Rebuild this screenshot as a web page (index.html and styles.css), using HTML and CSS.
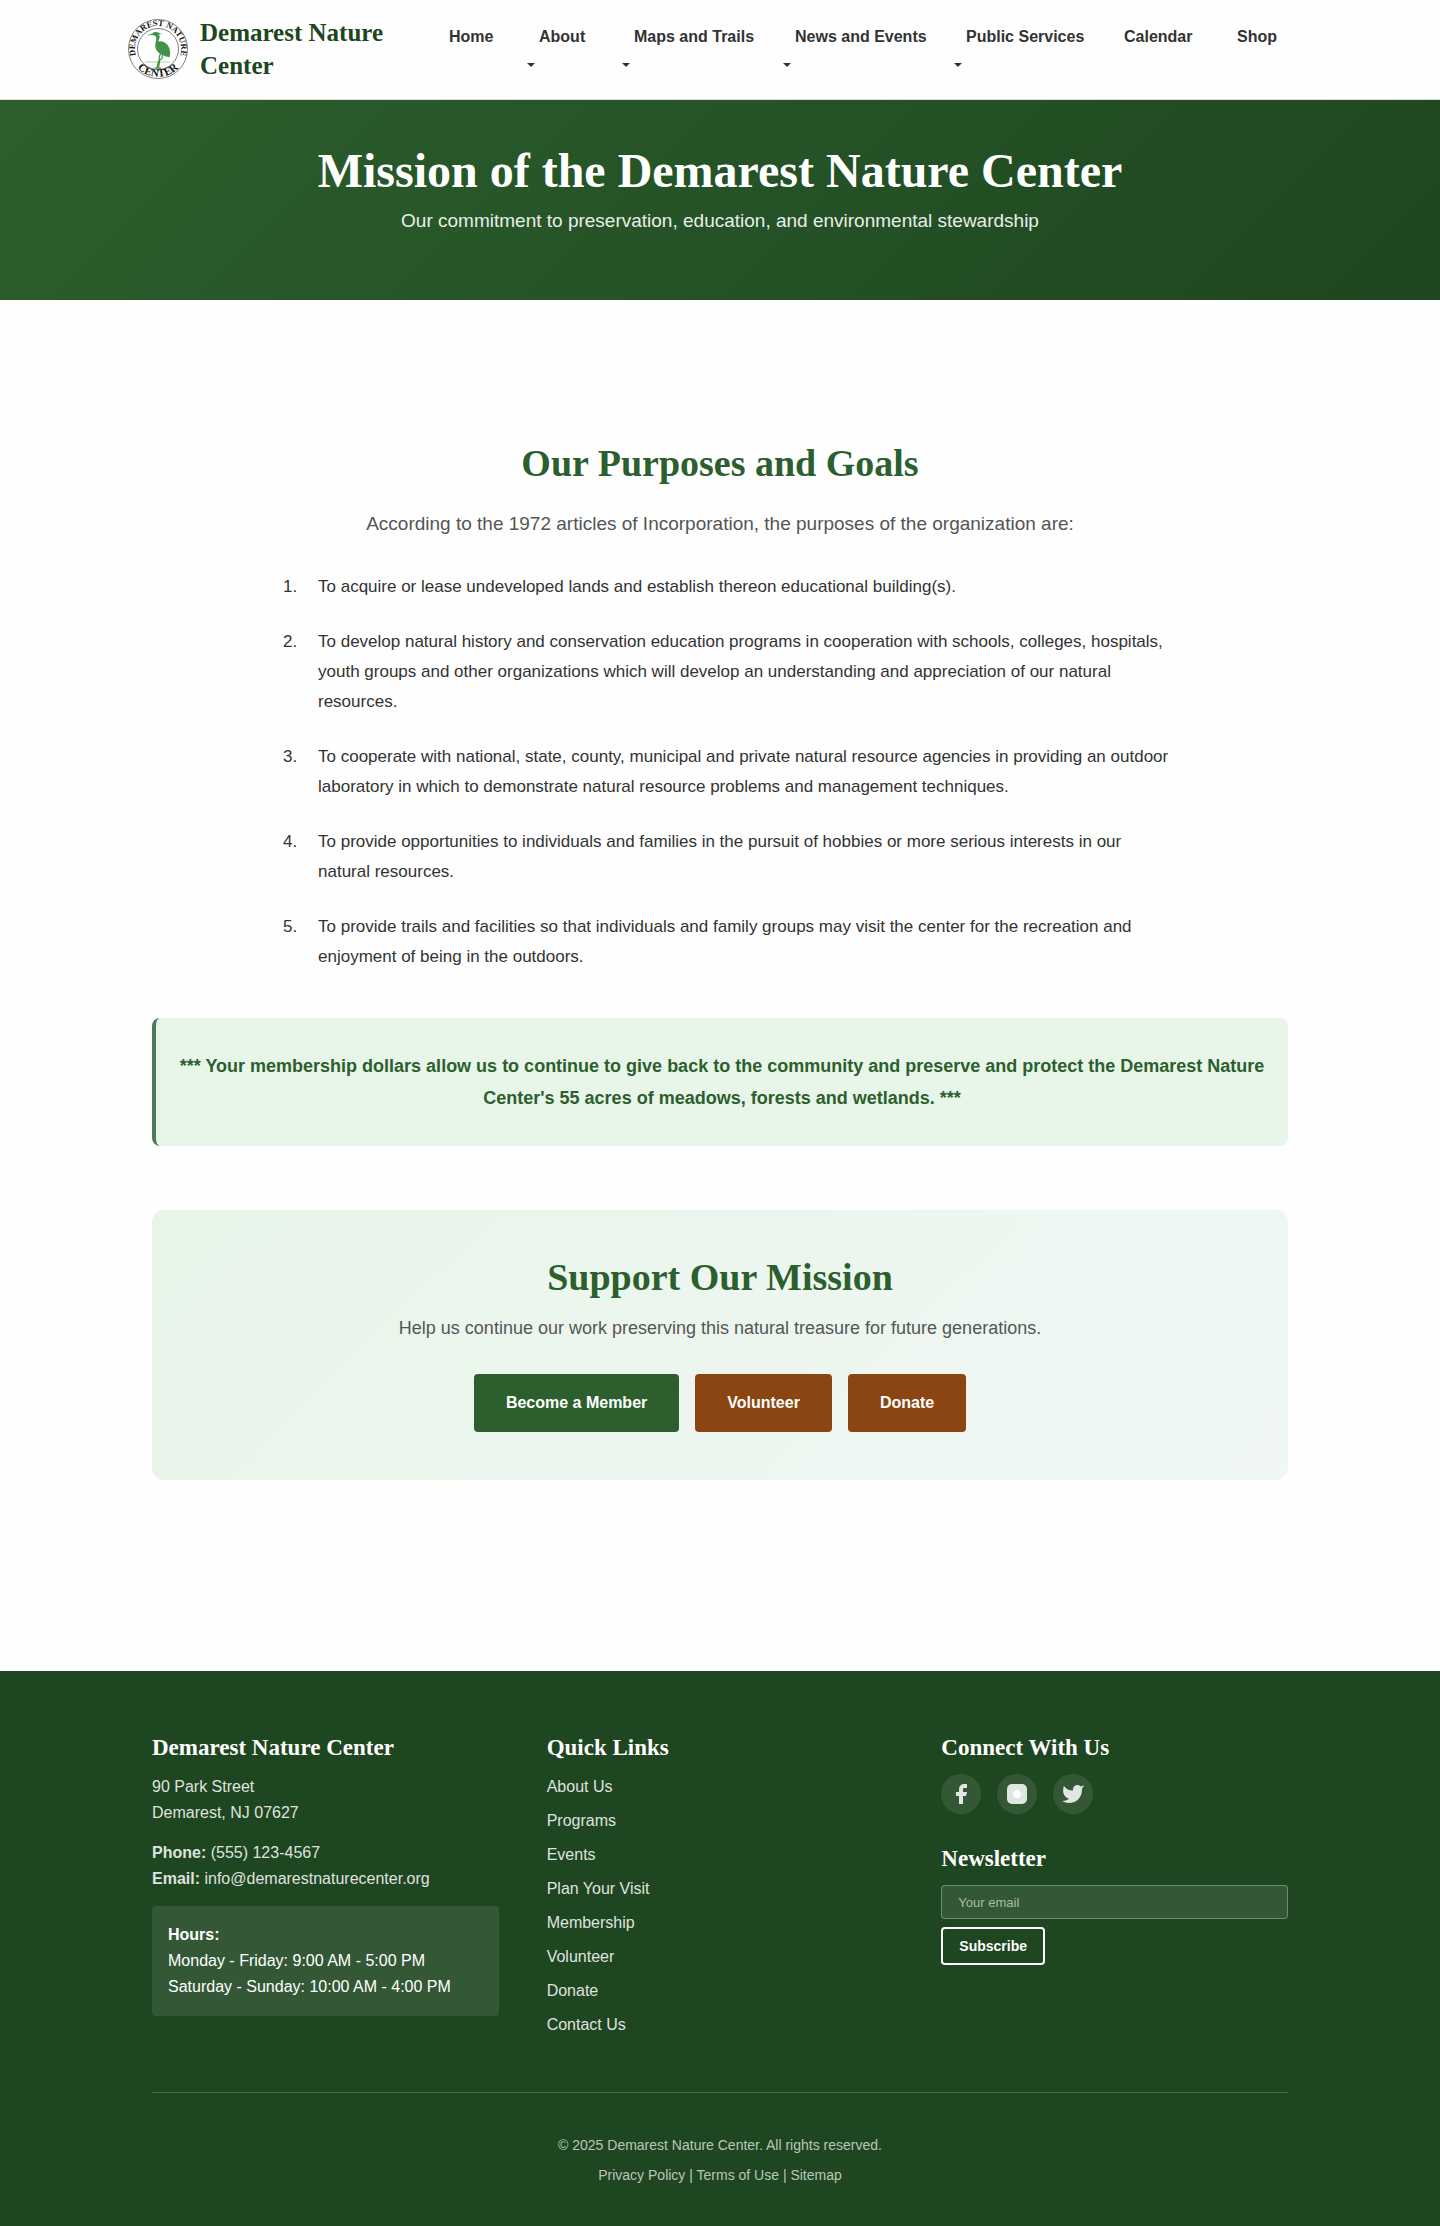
FILE: index.html
```html
<!DOCTYPE html>
<html lang="en">
<head>
<meta charset="utf-8">
<meta name="viewport" content="width=device-width, initial-scale=1">
<title>Mission | Demarest Nature Center</title>
<link rel="stylesheet" href="styles.css">
</head>
<body>
<header class="site-header">
  <div class="header-inner">
    <a class="brand" href="#">
      <svg class="brand-logo" viewBox="0 0 120 120" aria-hidden="true">
        <defs>
          <path id="ring-top" d="M22.500 86.500A46 46 0 1 1 97.500 86.500"/>
          <path id="ring-bottom" d="M10 85A56 56 0 0 0 110 85"/>
        </defs>
        <circle cx="60" cy="60" r="59" fill="#fff" stroke="#555" stroke-width="1.500"/>
        <circle cx="60" cy="60" r="41" fill="#fff" stroke="#555" stroke-width="1.500"/>
        <text class="ring-text"><textPath href="#ring-top" startOffset="50%">DEMAREST NATURE</textPath></text>
        <text class="ring-text ring-text-large"><textPath href="#ring-bottom" startOffset="50%">CENTER</textPath></text>
        <path d="M34 86H84" stroke="#a9d3ac" stroke-width="2"/>
        <path fill="#43924a" d="M38 33L49 29C51 25 57 25 63 28L67 30L61 31C66 35 62 41 60 45C69 43 79 49 82 57C85 64 85 71 83 77C80 74 79 76 76 75L67 71C58 67 53 58 55 48C56 43 58 39 55 34L49 32Z"/>
        <path fill="none" stroke="#43924a" stroke-width="2.500" stroke-linejoin="round" d="M69 70L68 79L61 84L58 98M65 69L62 78L63 86L61 98M53 98H66"/>
      </svg>
      <span class="brand-name">Demarest Nature Center</span>
    </a>
    <nav aria-label="Main">
      <ul class="nav-list">
        <li><a href="#">Home</a></li>
        <li class="has-menu"><a href="#">About</a></li>
        <li class="has-menu"><a href="#">Maps and Trails</a></li>
        <li class="has-menu"><a href="#">News and Events</a></li>
        <li class="has-menu"><a href="#">Public Services</a></li>
        <li><a href="#">Calendar</a></li>
        <li><a href="#">Shop</a></li>
      </ul>
    </nav>
  </div>
</header>

<section class="hero">
  <h1>Mission of the Demarest Nature Center</h1>
  <p>Our commitment to preservation, education, and environmental stewardship</p>
</section>

<main class="container">
  <section class="purposes">
    <h2>Our Purposes and Goals</h2>
    <p class="lead">According to the 1972 articles of Incorporation, the purposes of the organization are:</p>
    <ol class="goals">
      <li>To acquire or lease undeveloped lands and establish thereon educational building(s).</li>
      <li>To develop natural history and conservation education programs in cooperation with schools, colleges, hospitals, youth groups and other organizations which will develop an understanding and appreciation of our natural resources.</li>
      <li>To cooperate with national, state, county, municipal and private natural resource agencies in providing an outdoor laboratory in which to demonstrate natural resource problems and management techniques.</li>
      <li>To provide opportunities to individuals and families in the pursuit of hobbies or more serious interests in our natural resources.</li>
      <li>To provide trails and facilities so that individuals and family groups may visit the center for the recreation and enjoyment of being in the outdoors.</li>
    </ol>
  </section>
  <p class="callout">*** Your membership dollars allow us to continue to give back to the community and preserve and protect the Demarest Nature Center's 55 acres of meadows, forests and wetlands. ***</p>
  <section class="support">
    <h2>Support Our Mission</h2>
    <p>Help us continue our work preserving this natural treasure for future generations.</p>
    <div class="actions">
      <a class="btn btn-primary" href="#">Become a Member</a>
      <a class="btn btn-secondary" href="#">Volunteer</a>
      <a class="btn btn-secondary" href="#">Donate</a>
    </div>
  </section>
</main>

<footer class="site-footer">
  <div class="container">
    <div class="footer-grid">
      <section>
        <h3>Demarest Nature Center</h3>
        <p>90 Park Street<br>Demarest, NJ 07627</p>
        <p><strong>Phone:</strong> (555) 123-4567<br><strong>Email:</strong> info@demarestnaturecenter.org</p>
        <div class="hours"><strong>Hours:</strong><br>Monday - Friday: 9:00 AM - 5:00 PM<br>Saturday - Sunday: 10:00 AM - 4:00 PM</div>
      </section>
      <section>
        <h3>Quick Links</h3>
        <ul class="footer-links">
          <li><a href="#">About Us</a></li>
          <li><a href="#">Programs</a></li>
          <li><a href="#">Events</a></li>
          <li><a href="#">Plan Your Visit</a></li>
          <li><a href="#">Membership</a></li>
          <li><a href="#">Volunteer</a></li>
          <li><a href="#">Donate</a></li>
          <li><a href="#">Contact Us</a></li>
        </ul>
      </section>
      <section>
        <h3>Connect With Us</h3>
        <div class="social">
          <a href="#" aria-label="Facebook"><svg viewBox="0 0 24 24"><path d="M18 2h-3a5 5 0 0 0-5 5v3H7v4h3v8h4v-8h3l1-4h-4V7a1 1 0 0 1 1-1h3z"/></svg></a>
          <a href="#" aria-label="Instagram"><svg viewBox="0 0 24 24"><rect x="2" y="2" width="20" height="20" rx="5"/><circle class="lens" cx="12" cy="12" r="4"/></svg></a>
          <a href="#" aria-label="Twitter"><svg viewBox="0 0 24 24"><path d="M23 3a10.900 10.900 0 0 1-3.140 1.530 4.480 4.480 0 0 0-7.860 3v1A10.660 10.660 0 0 1 3 4s-4 9 5 13a11.640 11.640 0 0 1-7 2c9 5 20 0 20-11.500a4.500 4.500 0 0 0-.080-.830A7.720 7.720 0 0 0 23 3z"/></svg></a>
        </div>
        <h3><label for="newsletter-email">Newsletter</label></h3>
        <form class="newsletter">
          <input type="email" id="newsletter-email" placeholder="Your email">
          <button type="submit">Subscribe</button>
        </form>
      </section>
    </div>
    <div class="footer-bottom">
      <p>© 2025 Demarest Nature Center. All rights reserved.</p>
      <p><a href="#">Privacy Policy</a> | <a href="#">Terms of Use</a> | <a href="#">Sitemap</a></p>
    </div>
  </div>
</footer>
</body>
</html>
```
FILE: styles.css
```css
*,
*::before,
*::after {
  box-sizing: border-box;
}

:root {
  --green: #2c5f2d;
  --green-dark: #1e4620;
  --brown: #8b4513;
  --mint: #e8f5e9;
  --serif: "Liberation Serif", "Times New Roman", serif;
  --sans: "Liberation Sans", Arial, sans-serif;
}

body {
  margin: 0;
  background: #fefefe;
  color: #333;
  font: 16px/26px var(--sans);
}

h1, h2, h3, p, ul, ol {
  margin: 0;
  padding: 0;
}

h1, h2, h3 {
  font-family: var(--serif);
  font-weight: 700;
}

h2 {
  color: var(--green);
  font-size: 38px;
  line-height: 48px;
}

a {
  color: inherit;
  text-decoration: none;
}

/* Header */
.site-header {
  padding: 16px 24px 17px;
  background: #fefefe;
  border-bottom: 1px solid #ddd;
}

.header-inner {
  display: flex;
  align-items: center;
  justify-content: space-between;
  max-width: 1184px;
  margin: 0 auto;
}

.brand {
  display: flex;
  align-items: center;
  gap: 12px;
  max-width: 272px;
  color: var(--green-dark);
}

.brand-logo {
  flex: none;
  width: 60px;
  height: 60px;
}

.brand-name {
  font: 700 25px/33px var(--serif);
}

.ring-text {
  fill: #111;
  font: 700 17px var(--serif);
  text-anchor: middle;
}

.ring-text-large {
  font-size: 22px;
}

.nav-list {
  display: grid;
  grid-template-columns: 90px 95px 161px 171px 158px 113px 91px;
  list-style: none;
  font-weight: 700;
  line-height: 29px;
  min-height: 54px;
}

.nav-list a {
  display: block;
  padding: 0 0 0 16px;
  white-space: nowrap;
}

.has-menu::after {
  content: "";
  display: block;
  width: 0;
  margin: 12px 0 0 4px;
  border: solid transparent;
  border-width: 4px 4px 0;
  border-top-color: #333;
}

/* Hero */
.hero {
  padding: 40px 24px 62px;
  background: linear-gradient(135deg, var(--green), var(--green-dark));
  color: #fff;
  text-align: center;
}

.hero h1 {
  font-size: 48px;
  line-height: 62px;
}

.hero p {
  margin-top: 2px;
  font-size: 19px;
  line-height: 34px;
  opacity: .9;
}

/* Content */
.container {
  max-width: 1184px;
  margin: 0 auto;
  padding: 0 24px;
}

main.container {
  padding-top: 139px;
  padding-bottom: 191px;
}

.purposes {
  text-align: center;
}

.lead {
  margin: 21px 0 32px;
  color: #555;
  font-size: 19px;
  line-height: 32px;
}

.goals {
  max-width: 900px;
  margin: 0 auto;
  padding-left: 48px;
  list-style: none;
  counter-reset: goal;
  font-size: 17px;
  line-height: 30px;
  text-align: left;
}

.goals li {
  margin-bottom: 25px;
  counter-increment: goal;
}

.goals li::before {
  content: counter(goal) ".";
  float: left;
  width: 35px;
  margin-left: -35px;
}

.callout {
  margin-top: 46px;
  padding: 32px 20px;
  border-left: 4px solid #4a7c59;
  border-radius: 8px;
  background: var(--mint);
  color: var(--green);
  font-size: 18px;
  font-weight: 700;
  line-height: 32px;
  text-align: center;
}

.support {
  margin-top: 64px;
  padding: 43px 48px 48px;
  border-radius: 12px;
  background: linear-gradient(135deg, var(--mint), #f0f7f4);
  text-align: center;
}

.support p {
  margin: 11px 0 30px;
  color: #555;
  font-size: 18px;
  line-height: 32px;
}

.actions {
  display: flex;
  flex-wrap: wrap;
  justify-content: center;
  gap: 16px;
}

.btn {
  padding: 16px 32px;
  border-radius: 4px;
  color: #fff;
  font-weight: 700;
}

.btn-primary {
  background: var(--green);
}

.btn-secondary {
  background: var(--brown);
}

/* Footer */
.site-footer {
  padding: 64px 0 36px;
  background: var(--green-dark);
  color: #fff;
}

.footer-grid {
  display: grid;
  grid-template-columns: repeat(3, 1fr);
  gap: 48px;
}

.site-footer h3 {
  margin-bottom: 13px;
  font-size: 23px;
  line-height: 26px;
}

.footer-grid p {
  margin-bottom: 14px;
  opacity: .85;
}

.hours {
  padding: 16px;
  border-radius: 4px;
  background: rgba(255, 255, 255, .1);
}

.footer-links {
  list-style: none;
  opacity: .85;
}

.footer-links li {
  margin-bottom: 8px;
}

.social {
  display: flex;
  gap: 16px;
  margin-bottom: 32px;
}

.social a {
  display: grid;
  place-items: center;
  width: 40px;
  height: 40px;
  border-radius: 50%;
  background: rgba(255, 255, 255, .1);
}

.social svg {
  width: 24px;
  height: 24px;
  fill: rgba(255, 255, 255, .85);
}

.social .lens {
  fill: #fff;
}

.newsletter {
  display: flex;
  flex-direction: column;
  align-items: flex-start;
  gap: 8px;
}

.newsletter input {
  width: 100%;
  height: 34px;
  padding: 0 16px;
  border: 1px solid rgba(255, 255, 255, .3);
  border-radius: 4px;
  background: rgba(255, 255, 255, .1);
  color: #fff;
  font: 13px var(--sans);
}

.newsletter input::placeholder {
  color: rgba(255, 255, 255, .6);
}

.newsletter button {
  height: 38px;
  padding: 0 16px;
  border: 2px solid #fff;
  border-radius: 4px;
  background: transparent;
  color: #fff;
  font: 700 14px var(--sans);
}

.footer-bottom {
  margin-top: 46px;
  padding-top: 37px;
  border-top: 1px solid rgba(255, 255, 255, .2);
  color: rgba(255, 255, 255, .7);
  font-size: 14px;
  line-height: 30px;
  text-align: center;
}
```
